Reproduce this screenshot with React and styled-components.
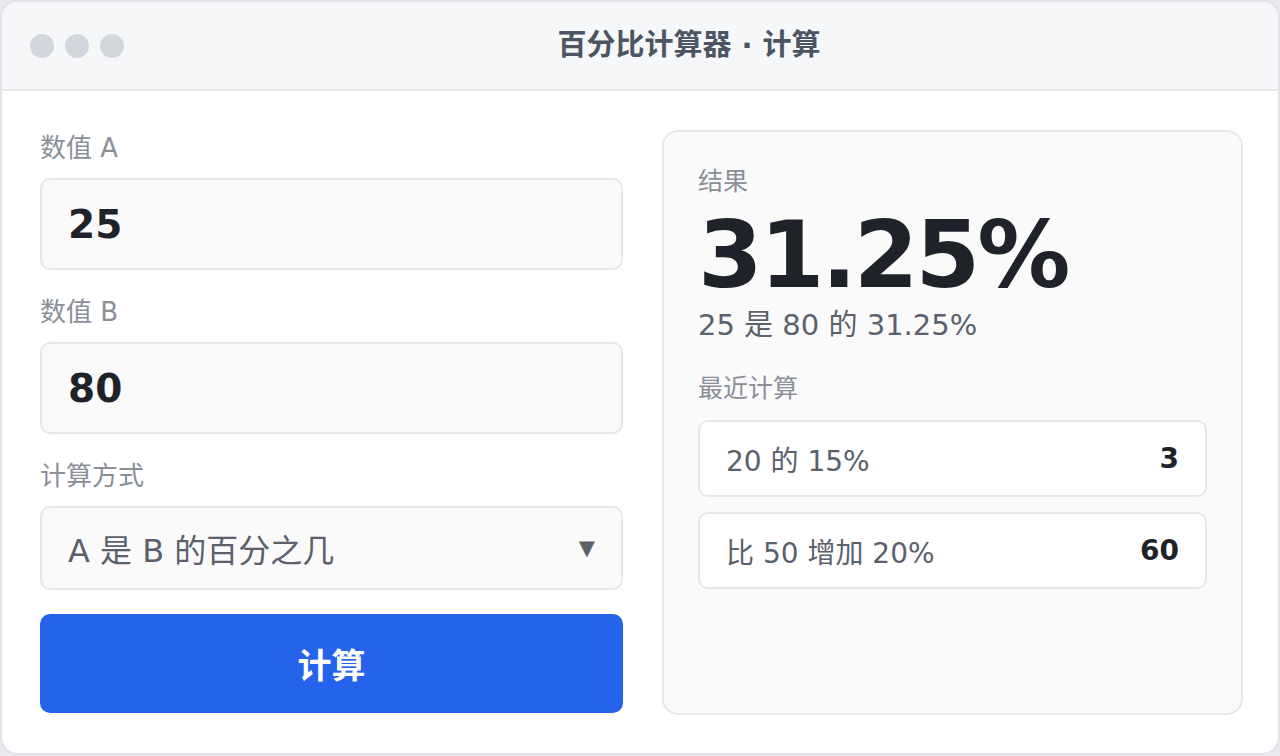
import React from 'react'
import styled, { createGlobalStyle } from 'styled-components'

const GlobalStyle = createGlobalStyle`
    html, body {
        margin: 0;
        padding: 0;
        background-color: #e7e9ee;
    }
    body {
        font-family: "DejaVu Sans", "Noto Sans CJK SC", sans-serif;
    }
    * {
        box-sizing: border-box;
    }
`;

const StyledWindow = styled.div`
    width: 1280px;
    height: 755px;
    margin: 0;
    display: flex;
    flex-direction: column;
    background-color: #ffffff;
    border: 2px solid #e2e4e9;
    border-radius: 18px;
    overflow: hidden;
`;
const StyledTitleBar = styled.div`
    height: 89px;
    flex-shrink: 0;
    display: flex;
    align-items: center;
    padding: 0 24px 0 28px;
    background-color: #f6f7f9;
    border-bottom: 2px solid #e5e7eb;
`;
const StyledDots = styled.div`
    display: flex;
    gap: 11px;
`;
const StyledDot = styled.span`
    width: 24px;
    height: 24px;
    border-radius: 50%;
    background-color: #d4d6de;
`;
const StyledTitle = styled.h1`
    flex: 1;
    margin: 0;
    text-align: center;
    font-size: 29px;
    line-height: 1;
    font-weight: 700;
    color: #4b5563;
`;
const StyledMain = styled.div`
    flex: 1;
    display: grid;
    grid-template-columns: 583px 581px;
    column-gap: 39px;
    padding: 39px 36px 38px 38px;
`;
const StyledForm = styled.div`
    display: flex;
    flex-direction: column;
`;
const StyledField = styled.div`
    display: flex;
    flex-direction: column;
    gap: 12px;
    margin-bottom: 24px;
`;
const StyledLabel = styled.label`
    font-size: 26px;
    line-height: 36px;
    color: #8a8f98;
`;
const StyledInput = styled.div`
    height: ${p => p.$h}px;
    display: flex;
    align-items: center;
    justify-content: space-between;
    padding: 0 26px;
    background-color: #fafafa;
    border: 2px solid #e5e7eb;
    border-radius: 10px;
    font-size: ${p => p.$select ? '32px' : '39px'};
    font-weight: ${p => p.$select ? 400 : 700};
    color: ${p => p.$select ? '#5b616b' : '#1f2329'};
`;
const StyledArrow = styled.span`
    font-size: 21px;
    color: #5b616b;
`;
const StyledButton = styled.button`
    height: 99px;
    width: 100%;
    border: none;
    border-radius: 10px;
    background-color: #2563eb;
    color: #ffffff;
    font-family: inherit;
    font-size: 34px;
    font-weight: 700;
`;
const StyledPanel = styled.div`
    display: flex;
    flex-direction: column;
    padding: 34px 34px;
    background-color: #fafafa;
    border: 2px solid #e5e7eb;
    border-radius: 16px;
`;
const StyledSmall = styled.div`
    font-size: 25px;
    line-height: 32px;
    color: #8a8f98;
`;
const StyledBig = styled.div`
    font-size: 93px;
    font-weight: 700;
    letter-spacing: -3px;
    line-height: 100px;
    margin-top: 7px;
    color: #1f2329;
`;
const StyledSub = styled.div`
    font-size: 29px;
    line-height: 40px;
    color: #5b616b;
    margin-bottom: 28px;
`;
const StyledList = styled.div`
    display: flex;
    flex-direction: column;
    gap: 15px;
    margin-top: 15px;
`;
const StyledRow = styled.div`
    height: 77px;
    display: flex;
    align-items: center;
    justify-content: space-between;
    padding: 0 26px;
    background-color: #ffffff;
    border: 2px solid #e5e7eb;
    border-radius: 10px;
    font-size: 28px;
    color: #5b616b;
`;
const StyledRowValue = styled.span`
    font-weight: 700;
    color: #1f2329;
`;

const recent = [
    { label: '20 的 15%', value: '3' },
    { label: '比 50 增加 20%', value: '60' },
]

const App = () => {

    return (
        <>
            <GlobalStyle />
            <StyledWindow>
                <StyledTitleBar>
                    <StyledDots>
                        <StyledDot />
                        <StyledDot />
                        <StyledDot />
                    </StyledDots>
                    <StyledTitle>百分比计算器 · 计算</StyledTitle>
                </StyledTitleBar>
                <StyledMain>
                    <StyledForm>
                        <StyledField>
                            <StyledLabel>数值 A</StyledLabel>
                            <StyledInput $h={92}>25</StyledInput>
                        </StyledField>
                        <StyledField>
                            <StyledLabel>数值 B</StyledLabel>
                            <StyledInput $h={92}>80</StyledInput>
                        </StyledField>
                        <StyledField>
                            <StyledLabel>计算方式</StyledLabel>
                            <StyledInput $h={84} $select>
                                A 是 B 的百分之几
                                <StyledArrow>▼</StyledArrow>
                            </StyledInput>
                        </StyledField>
                        <StyledButton>计算</StyledButton>
                    </StyledForm>
                    <StyledPanel>
                        <StyledSmall>结果</StyledSmall>
                        <StyledBig>31.25%</StyledBig>
                        <StyledSub>25 是 80 的 31.25%</StyledSub>
                        <StyledSmall>最近计算</StyledSmall>
                        <StyledList>
                            {recent.map(r => (
                                <StyledRow key={r.label}>
                                    {r.label}
                                    <StyledRowValue>{r.value}</StyledRowValue>
                                </StyledRow>
                            ))}
                        </StyledList>
                    </StyledPanel>
                </StyledMain>
            </StyledWindow>
        </>
    )
}
export default App
